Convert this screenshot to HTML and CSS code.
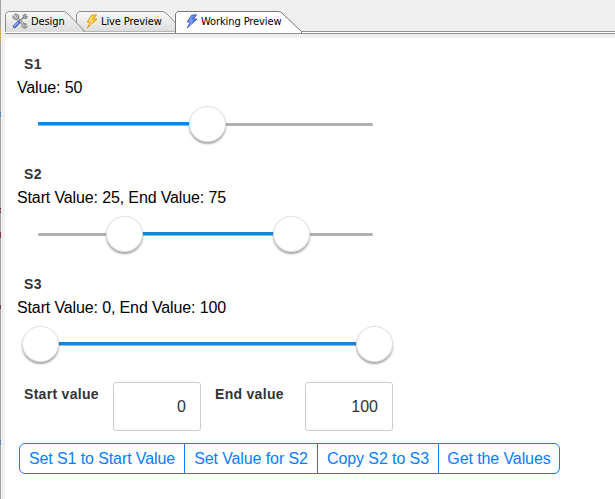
FILE: index.html
```html
<!DOCTYPE html>
<html lang="en">
<head>
<meta charset="utf-8">
<title>Working Preview</title>
<link rel="stylesheet" href="styles.css">
</head>
<body>
<div class="gutter">
  <svg width="5" height="499" shape-rendering="crispEdges">
    <path fill="#a3a3a3" d="M0 0h1v499H0z"/>
    <path fill="#c9ae62" d="M0 27h1v16H0z"/>
    <path fill="#3f83b5" d="M0 112h1v2H0zM0 115h1v2H0zM0 440h1v2H0zM0 443h1v2H0z"/>
    <path fill="#7a3555" d="M0 208h1v2H0zM0 211h1v2H0zM0 232h1v6H0zM0 305h1v4H0z"/>
  </svg>
</div>
<div class="window">
  <nav class="tabs">
    <div class="tab tab-design">
      <svg class="shape" width="82" height="21">
        <defs><linearGradient id="g" x2="0" y2="1"><stop offset="0" stop-color="#f8f8f8"/><stop offset="1" stop-color="#dcdcdc"/></linearGradient></defs>
        <path fill="url(#g)" stroke="#8c8c8c" d="M.5 21V3.500L3 .5H58Q61 .5 63 3L79 19.500V21"/>
      </svg>
      <svg class="icon" width="16" height="16" viewBox="0 0 16 16">
        <path d="M4.500 4.500L12.500 12.500" stroke="#777" stroke-width="2.600"/>
        <path d="M4.500 4.500L12.500 12.500" stroke="#d0d0d0" stroke-width="1.200"/>
        <path d="M2.500 1L4.500 3.500L3.500 4.500L1 2.500Q0 5.500 2.500 6.500T6.500 5T5.500 1.500T2.500 1M11 10.500Q13 9.500 15 11.500L12.500 12L13 14L15.500 13.500Q14 16 11.500 15T10 12" fill="#b4b4b4" stroke="#808080" stroke-width=".8"/>
        <path d="M7 8.500L12 4" stroke="#888" stroke-width="1.600"/>
        <path d="M11 2L14 1L13 3.500L15.500 3L14.500 5.500L11.500 5.500Z" fill="#aaa" stroke="#777" stroke-width=".7"/>
        <path d="M2.500 13.500L6.500 9.500" stroke="#4a62c4" stroke-width="3.400" stroke-linecap="round"/>
        <path d="M2.500 13L6 9.500" stroke="#9cb4f4" stroke-width="1.300" stroke-linecap="round"/>
      </svg>
      <span>Design</span>
    </div>
    <div class="tab tab-live">
      <svg class="shape" width="102" height="21">
        <path fill="url(#g)" stroke="#8c8c8c" d="M8 20L.5 12V3.500L3 .5H86Q89 .5 91 3L102 14.500V21H9"/>
      </svg>
      <svg class="icon" width="12" height="16" viewBox="0 0 12 16"><path d="M5.500 2.200L10.500 1.700L7.500 6H11L1.200 15L4.500 9H1.300Z" fill="#ffc62b" stroke="#dc9428" stroke-width=".9"/><path d="M6 3.500L3.500 8H6.300L4 12" fill="none" stroke="#fff0a0"/></svg>
      <span>Live Preview</span>
    </div>
    <div class="tab tab-working">
      <svg class="shape" width="129" height="22">
        <path fill="#fff" stroke="#777" d="M.5 22V3L2.500 .5H103Q106 .5 108 3L126.500 20.500V22"/>
      </svg>
      <svg class="icon" width="12" height="16" viewBox="0 0 12 16"><path d="M5.500 2.200L10.500 1.700L7.500 6H11L1.200 15L4.500 9H1.300Z" fill="#5b83ec" stroke="#3d54b8" stroke-width=".9"/><path d="M6 3.500L3.500 8H6.300L4 12" fill="none" stroke="#8fb0fa"/></svg>
      <span>Working Preview</span>
    </div>
  </nav>
  <div class="rule"></div>
  <main>
    <section class="slider">
      <h2>S1</h2>
      <p>Value: 50</p>
      <div class="track"><div class="range" style="left:0%;width:50%"></div><i style="left:50.800%"></i></div>
    </section>
    <section class="slider">
      <h2>S2</h2>
      <p>Start Value: 25, End Value: 75</p>
      <div class="track"><div class="range" style="left:25%;width:50%"></div><i style="left:26%"></i><i style="left:75.700%"></i></div>
    </section>
    <section class="slider">
      <h2>S3</h2>
      <p>Start Value: 0, End Value: 100</p>
      <div class="track"><div class="range" style="left:0%;width:100%"></div><i style="left:.9%"></i><i style="left:100.500%"></i></div>
    </section>
    <form class="fields">
      <label for="start">Start value</label><input id="start" value="0">
      <label for="end">End value</label><input id="end" value="100">
    </form>
    <div class="buttons">
      <button class="b1">Set S1 to Start Value</button><button class="b2">Set Value for S2</button><button class="b3">Copy S2 to S3</button><button class="b4">Get the Values</button>
    </div>
  </main>
</div>
</body>
</html>
```
FILE: styles.css
```css
* { box-sizing: border-box; }
body { margin: 0; height: 499px; display: flex; overflow: hidden; background: #efefef; font: 16px/20px "Liberation Sans", Arial, sans-serif; color: #000; }
.gutter { width: 5px; flex: none; }
.gutter svg { display: block; }
.window { flex: 1; display: flex; flex-direction: column; }
.tabs { display: flex; height: 31px; padding-top: 11px; flex: none; }
.tab { position: relative; display: flex; align-items: center; height: 20px; font: 11px/20px "DejaVu Sans Condensed", "DejaVu Sans", sans-serif; letter-spacing: -.1px; white-space: nowrap; }
.tab-design { width: 71px; padding-left: 7px; z-index: 2; }
.tab-live { width: 99px; padding-left: 10px; }
.tab-working { width: 129px; padding-left: 11px; z-index: 3; }
.shape { position: absolute; left: 0; top: 0; }
.icon { position: relative; flex: none; }
.tab span { position: relative; margin-left: 3px; padding-top: 2px; }
.rule { height: 3px; flex: none; border-top: 1px solid #909090; border-bottom: 1px solid #909090; background: #fff; }
main { flex: 1; margin-top: 4px; background: #fff; padding: 16px 0 0 12px; }
.slider { height: 110px; }
h2, label { margin: 0; font-size: 14px; line-height: 20px; font-weight: bold; letter-spacing: .3px; color: #333; }
h2 { padding-left: 7px; }
p { margin: 4px 0 0; letter-spacing: -.13px; }
.track { position: relative; width: 335px; height: 3px; margin: 25px 0 0 21px; border-radius: 2px; background: #b0b0b0; }
.range { position: absolute; top: -1px; height: 3px; background: #0f87de; }
.track i { position: absolute; top: -17px; width: 37px; height: 36px; margin-left: -19px; border-radius: 50%; background: #fff; border: 1px solid #e2e2e2; box-shadow: 0 2px 2px rgba(0,0,0,.35); }
.fields { display: flex; margin-left: 7px; height: 49px; margin-top: -2px; }
.fields label { width: 89px; padding-top: 2px; }
.fields input { width: 88px; height: 49px; margin-right: 14px; padding: 0 14px; text-align: right; border: 1px solid #ccc; border-radius: 3px; font: 16px "Liberation Sans", Arial, sans-serif; color: #333; background: #fff; }
.fields input + label { width: 90px; }
.buttons { display: flex; width: 541px; height: 31px; margin: 12px 0 0 2px; border: 1px solid #0a7cff; border-radius: 6px; }
button { padding: 0; border: 0; border-right: 1px solid #0a7cff; background: none; color: #0a7cff; font: 16px/28px "Liberation Sans", Arial, sans-serif; letter-spacing: -.1px; white-space: nowrap; }
.b1 { width: 165px; }
.b2 { width: 133px; }
.b3 { width: 121px; }
.b4 { flex: 1; border-right: 0; }
```
